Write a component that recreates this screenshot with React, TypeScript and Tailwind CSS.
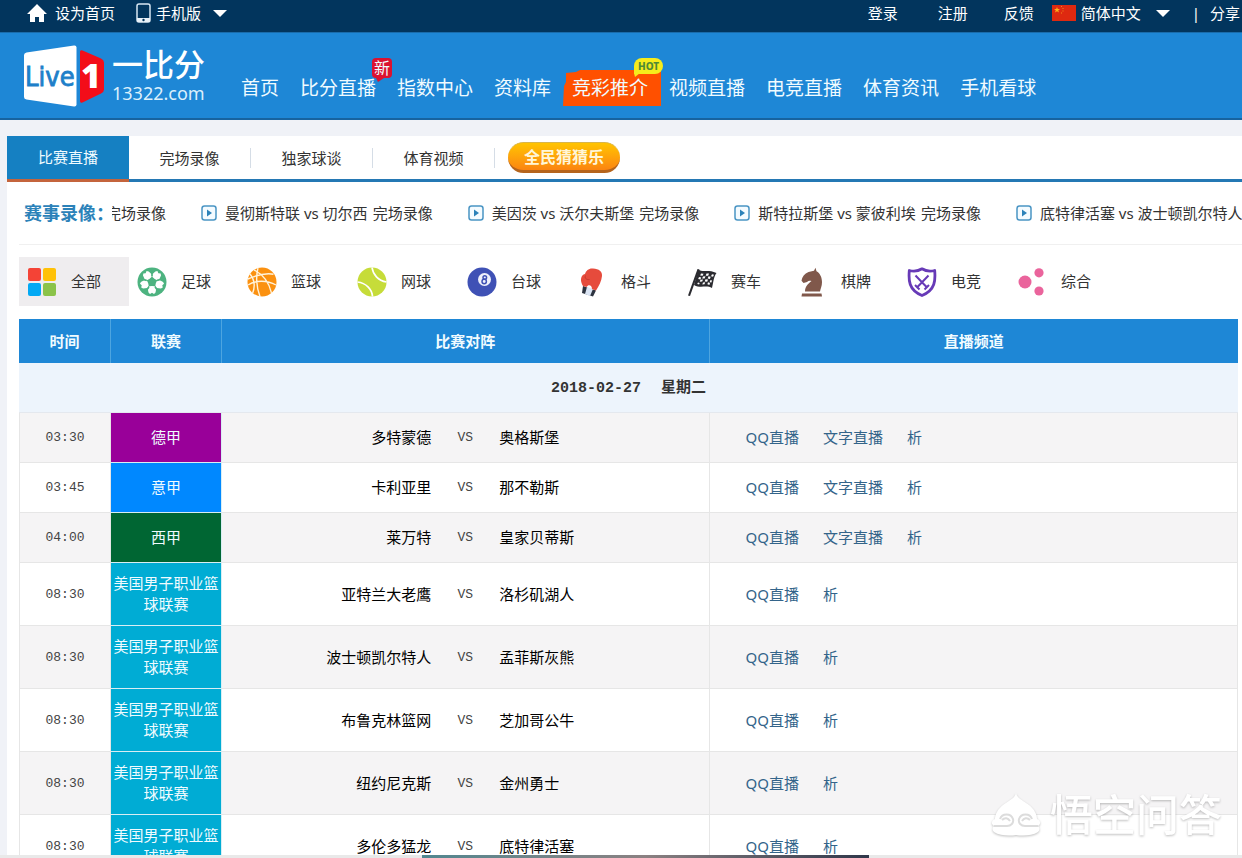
import React from "react";

interface Match {
    time: string;
    league: string;
    color: string;
    home: string;
    away: string;
    links: string[];
}

const NBA = "美国男子职业篮球联赛";
const FULL_LINKS = ["QQ直播", "文字直播", "析"];
const SHORT_LINKS = ["QQ直播", "析"];

const matches: Match[] = [
    { time: "03:30", league: "德甲", color: "bg-[#990099]", home: "多特蒙德", away: "奥格斯堡", links: FULL_LINKS },
    { time: "03:45", league: "意甲", color: "bg-[#0088ff]", home: "卡利亚里", away: "那不勒斯", links: FULL_LINKS },
    { time: "04:00", league: "西甲", color: "bg-[#006633]", home: "莱万特", away: "皇家贝蒂斯", links: FULL_LINKS },
    { time: "08:30", league: NBA, color: "bg-[#00acd4]", home: "亚特兰大老鹰", away: "洛杉矶湖人", links: SHORT_LINKS },
    { time: "08:30", league: NBA, color: "bg-[#00acd4]", home: "波士顿凯尔特人", away: "孟菲斯灰熊", links: SHORT_LINKS },
    { time: "08:30", league: NBA, color: "bg-[#00acd4]", home: "布鲁克林篮网", away: "芝加哥公牛", links: SHORT_LINKS },
    { time: "08:30", league: NBA, color: "bg-[#00acd4]", home: "纽约尼克斯", away: "金州勇士", links: SHORT_LINKS },
    { time: "08:30", league: NBA, color: "bg-[#00acd4]", home: "多伦多猛龙", away: "底特律活塞", links: SHORT_LINKS },
];

const navItems = ["首页", "比分直播", "指数中心", "资料库", "竞彩推介", "视频直播", "电竞直播", "体育资讯", "手机看球"];
const tabs = ["比赛直播", "完场录像", "独家球谈", "体育视频"];
const replays = [
    "曼彻斯特联 vs 切尔西",
    "美因茨 vs 沃尔夫斯堡",
    "斯特拉斯堡 vs 蒙彼利埃",
    "底特律活塞 vs 波士顿凯尔特人",
];

const Caret = () => (
    <svg className="h-[7px] w-[14px] shrink-0" viewBox="0 0 14 7" fill="#fff">
        <path d="M0 0h14L7 7z" />
    </svg>
);

const AllIcon = () => (
    <svg className="size-[30px]" viewBox="0 0 30 30">
        <rect x="1" y="1" width="13" height="13" rx="2" fill="#f44336" />
        <rect x="16" y="1" width="13" height="13" rx="2" fill="#ffc107" />
        <rect x="1" y="16" width="13" height="13" rx="2" fill="#03a9f4" />
        <rect x="16" y="16" width="13" height="13" rx="2" fill="#8bc34a" />
    </svg>
);

const SoccerIcon = () => (
    <svg className="size-[30px]" viewBox="0 0 30 30">
        <circle cx="15" cy="15" r="14.5" fill="#4db380" />
        {[36, 108, 180, 252, 324].map((a) => (
            <path
                key={a}
                transform={`rotate(${a} 15 15)`}
                d="M11.5 4.500L13 3l2 1.200L17 3l1.500 1.500.8 4-1.800 2.200L15 11l-2.500-.3-1.800-2.200z"
                fill="#fff"
            />
        ))}
        <path d="M15 11l3.800 2.800-1.400 4.500h-4.800l-1.400-4.500z" fill="#4db380" />
        <path d="M15 4v5M25 12l-5 1.500M4.500 12l5 1.500M21 24l-3-4M9 24l3-4" stroke="#4db380" strokeWidth="1.500" />
    </svg>
);

const BasketballIcon = () => (
    <svg className="size-[30px]" viewBox="0 0 30 30">
        <circle cx="15" cy="15" r="14.500" fill="#fb9110" />
        <g fill="none" stroke="#fff3dc" strokeWidth="1.400">
            <path d="M7 2.800C15 7 22 15 24.500 26M.8 12C10 8 20 6 26.500 7.200M11 1c-2 7-2 19 2 28.500M1 18c8-5 19-5 28 0M2.500 6.500c5 5 6 13 3 20" />
        </g>
    </svg>
);

const TennisIcon = () => (
    <svg className="size-[30px]" viewBox="0 0 30 30">
        <circle cx="15" cy="15" r="14.500" fill="#c6dc39" />
        <g fill="none" stroke="#fff" strokeWidth="1.700">
            <path d="M15 .5c1 7 6 13 14.500 14.500M.5 15C9 16 15 22 15.500 29.500" />
        </g>
    </svg>
);

const BilliardsIcon = () => (
    <svg className="size-[30px]" viewBox="0 0 30 30">
        <circle cx="15" cy="15" r="14.500" fill="#3f51b5" />
        <circle cx="17.500" cy="12.500" r="6.500" fill="#eef0fb" />
        <g fill="none" stroke="#3f51b5" strokeWidth="1.500">
            <circle cx="17.800" cy="10.500" r="1.800" />
            <circle cx="17.200" cy="14.500" r="2.200" />
        </g>
    </svg>
);

const BoxingIcon = () => (
    <svg className="size-[30px]" viewBox="0 0 30 30">
        <path d="M6 19l13 4.500-3 6L5 26z" fill="#2d3440" />
        <path d="M10 20l6 2-3 7-5-2z" fill="#dce6f5" />
        <path d="M6 19C3.500 15 3 10 6.500 7.500L8 7c1-3.500 4-6 8-5.500 6 .3 9.500 3 9 7.500-.5 5-3 10-6 14.500l-4-1.500c0-3-2-4.500-4-3.500L9.500 20z" fill="#e64b3c" />
        <path d="M8.500 8.500c-1 2.500.5 4.500 4 4" fill="none" stroke="#c63a2e" />
        <path d="M11 20l2-1 1 3z" fill="#f5f7fb" />
    </svg>
);

const RacingIcon = () => (
    <svg className="size-[30px]" viewBox="0 0 30 30">
        <path d="M10.500 2l2 .5L3 29l-2-.5z" fill="#2b2b30" />
        <path d="M11.500 2.500c4 3.500 9-.5 18 3.500-3 4-3 9-4.500 15-6-3.500-11 1-18-3z" fill="#2b2b30" />
        <g fill="#fff">
            <path d="M14 6.500l2.500.3-.8 2-2.500-.3zM19.500 6.500l2.500.1-.8 2.200-2.500-.1zM25 7.300l2 .5-1 2-2-.5zM16 9.500l2.500-.3-.8 2.300-2.500.1zM21.500 9.300l2.200.5-.8 2.200-2.200-.5zM12 10l2.200.5-.8 2-2.200-.5zM13.500 12.800l2.500-.4-.8 2.200-2.500.2zM18.500 12.300l2.500.2-.8 2.200-2.500-.2zM23.500 13.100l1.500.5-.6 2-1.800-.4zM11 15.500l1.700.4-.6 1.500-1.900-.4zM16 15.500l2.200-.3-.7 2-2.200.3zM21 15.300l2 .7-.6 1.900-2-.6z" />
        </g>
    </svg>
);

const ChessIcon = () => (
    <svg className="size-[30px]" viewBox="0 0 30 30" fill="#80584b">
        <path d="M18.500.8l1 3.500c3.500 2 5.500 6 5.500 11 0 4-1.500 6.500-2 9.200H8c0-5 3-7.500 6.500-10.500-2-.6-3-.3-4.500 1L6.500 16l-2-2.300c.5-4 3-7 7-8.700l5.500-1.200z" />
        <path d="M5 26.500h19.500l.5 3H4.500z" />
    </svg>
);

const EsportsIcon = () => (
    <svg className="size-[30px]" viewBox="0 0 30 30" fill="none" stroke="#673ab7">
        <path d="M15 1.800c-3.500 2.200-8 3-12.700 1.700C1.500 13 1.500 23 15 28.500 28.500 23 28.500 13 27.700 3.500 23 4.800 18.500 4 15 1.800z" strokeWidth="2.800" strokeLinejoin="round" />
        <path d="M8.500 8.500L20.500 21M21.500 8.500L9.500 21M8 18l4.500 4.500M22 18l-4.500 4.500" strokeWidth="2" />
    </svg>
);

const MixedIcon = () => (
    <svg className="size-[30px]" viewBox="0 0 30 30" fill="#ea649c">
        <circle cx="8" cy="15" r="6.500" />
        <circle cx="22" cy="5.800" r="4.600" />
        <circle cx="22" cy="24" r="4.600" />
    </svg>
);

const categories = [
    { label: "全部", Icon: AllIcon },
    { label: "足球", Icon: SoccerIcon },
    { label: "篮球", Icon: BasketballIcon },
    { label: "网球", Icon: TennisIcon },
    { label: "台球", Icon: BilliardsIcon },
    { label: "格斗", Icon: BoxingIcon },
    { label: "赛车", Icon: RacingIcon },
    { label: "棋牌", Icon: ChessIcon },
    { label: "电竞", Icon: EsportsIcon },
    { label: "综合", Icon: MixedIcon },
];

const TopBar = () => (
    <div className="flex h-[33px] shrink-0 items-center border-b border-[#1a6cab] bg-[#02355d] pr-0.5 pb-1.5 pl-[27px] text-[15px] leading-5 whitespace-nowrap text-white">
        <a href="#" className="flex items-center gap-2">
            <svg className="h-[18px] w-5" viewBox="0 0 20 18" fill="#fff">
                <path d="M10 0l10 10h-3v8h-5v-5H8v5H3v-8H0z" />
            </svg>
            设为首页
        </a>
        <button className="ml-[21px] flex items-center">
            <svg className="mr-[5px] h-5 w-[15px]" viewBox="0 0 15 20">
                <rect x="1" y="1" width="13" height="18" rx="2" fill="none" stroke="#d7e6f2" strokeWidth="1.500" />
                <path d="M1 15h13v4H1z" fill="#e8f1f8" />
                <circle cx="7.500" cy="17" r="1.200" fill="#02355d" />
            </svg>
            手机版
            <span className="ml-3"><Caret /></span>
        </button>
        <div className="ml-auto flex items-center">
            <a href="#">登录</a>
            <a href="#" className="ml-10">注册</a>
            <a href="#" className="ml-9">反馈</a>
            <svg className="ml-[18px] h-4 w-6" viewBox="0 0 24 16">
                <path d="M0 0h24v16H0z" fill="#de2910" />
                <path d="M5 2l.8 2H8L6.300 5.300l.6 2.200L5 6.200 3.100 7.500l.6-2.200L2 4h2.200z" fill="#ffb01a" />
                <path d="M9 1h1v1H9zM10.500 3h1v1h-1zM10.500 5.500h1v1h-1zM9 7.500h1v1H9z" fill="#f08a1a" />
            </svg>
            <label className="ml-[5px] flex items-center gap-3.5">
                <select aria-label="语言" className="appearance-none bg-transparent">
                    <option>简体中文</option>
                </select>
                <Caret />
            </label>
            <span className="ml-[22px]">|</span>
            <a href="#" className="ml-[10px]">分享</a>
        </div>
    </div>
);

const Logo = () => (
    <a href="#" className="flex shrink-0 items-center gap-2">
        <svg className="h-[62px] w-20" viewBox="0 0 80 62">
            <path d="M2.500 7.500L50 .5q2.500-.3 2.500 2v57q0 2.300-2.500 2L2.500 54.500Q0 54 0 52V10q0-2 2.500-2.500z" fill="#fff" />
            <path d="M56 7q0-2.500 2.500-1.500L77 13.500q3 1.500 3 4v27q0 2.500-3 4L58.500 57.500Q56 58.500 56 56z" fill="#f30d19" />
            <text x="1" y="41" fontSize="27" fill="#1e7fc9" stroke="#1e7fc9" strokeWidth="0.800" fontFamily="DejaVu Sans Condensed, sans-serif">Live</text>
            <text x="57" y="43" fontSize="34" fontWeight="800" fill="#fff" fontFamily="Open Sans, sans-serif">1</text>
        </svg>
        <span className="flex flex-col text-white">
            <span className="text-[31px] leading-[34px] font-medium">一比分</span>
            <span className="text-lg leading-6 text-[#dcf0fc]">13322.com</span>
        </span>
    </a>
);

const Header = () => (
    <header className="flex h-[87px] shrink-0 items-center border-b-2 border-[#17639f] bg-[#1e87d6] pl-6">
        <Logo />
        <nav className="ml-9 flex gap-[21px] pt-6 text-[19px] leading-7 whitespace-nowrap text-[#f0fbff]">
            {navItems.map((item) => (
                <a key={item} href="#" className="relative">
                    {item === "竞彩推介" && (
                        <svg className="absolute -top-1 -left-[9px] h-9 w-[98px]" viewBox="0 0 98 36" fill="#ff5000">
                            <path d="M3 3l10-1 4-2h81v36H0l1-20 2-4z" />
                        </svg>
                    )}
                    <span className="relative">{item}</span>
                    {item === "比分直播" && (
                        <span className="absolute -top-4 -right-4 rounded-sm bg-[#dc1230] px-0.5 text-base leading-5">
                            新
                            <svg className="absolute top-5 left-1 h-1 w-2" viewBox="0 0 8 4" fill="#dc1230">
                                <path d="M0 0h8L2 4z" />
                            </svg>
                        </span>
                    )}
                    {item === "竞彩推介" && (
                        <span className="absolute -top-4 -right-[15px] h-4 w-[29px] rounded-t-lg rounded-br-lg bg-[#f6ec1c] text-center text-[10px] leading-4 font-extrabold text-[#4d8a36]">
                            HOT
                            <svg className="absolute top-[15px] left-0 h-1 w-1.5" viewBox="0 0 6 4" fill="#f6ec1c">
                                <path d="M0 0h6L1 4z" />
                            </svg>
                        </span>
                    )}
                </a>
            ))}
        </nav>
    </header>
);

const Tabs = () => (
    <div className="flex h-[46px] items-stretch text-[15px]">
        {tabs.map((tab, i) => (
            <button
                key={tab}
                className={
                    i === 0
                        ? "w-[122px] border-b-3 border-[#c4643c] bg-[#1580c2] text-[#f0fbff]"
                        : "flex w-[122px] items-center border-b-3 border-[#2478b4]"
                }
            >
                {i === 0 ? tab : <span className="w-full border-r border-[#d5dde6] text-center leading-5">{tab}</span>}
            </button>
        ))}
        <div className="flex flex-1 items-center border-b-3 border-[#2478b4] pl-[13px]">
            <button className="h-[31px] rounded-full border-t border-b-3 border-t-[#d9b54a] border-b-[#b5641c] bg-linear-to-b from-[#ffc400] to-[#fb8410] px-4 text-base leading-[26px] font-bold text-[#fff6d8]">
                全民猜猜乐
            </button>
        </div>
    </div>
);

const Ticker = () => (
    <div className="ml-3 flex h-[63px] items-center border-b border-[#f0f0f0] pl-[5px] whitespace-nowrap">
        <h2 className="w-[88px] shrink-0 text-lg leading-7 font-bold text-[#2b82b9]">赛事录像：</h2>
        <div className="flex min-w-0 flex-1 overflow-hidden text-[15px] leading-6">
            <div className="-ml-1.5 flex gap-[35px]">
                <a href="#">完场录像</a>
                {replays.map((replay) => (
                    <a key={replay} href="#" className="flex shrink-0 items-center">
                        <svg className="mr-2 size-4" viewBox="0 0 16 16">
                            <rect x="1" y="1" width="14" height="14" rx="2.500" fill="#f4fbff" stroke="#4a95c4" strokeWidth="1.500" />
                            <path d="M6 4.500l5 3.500-5 3.500z" fill="#2b82b9" />
                        </svg>
                        <span>{replay}</span>
                        <span className="ml-[5px]">完场录像</span>
                    </a>
                ))}
            </div>
        </div>
    </div>
);

const Categories = () => (
    <div className="ml-3 flex pt-3 text-[15px]">
        {categories.map(({ label, Icon }, i) => (
            <button
                key={label}
                className={`flex h-[49px] w-[110px] shrink-0 items-center gap-3.5 pl-2 ${i === 0 ? "bg-[#efedef]" : ""}`}
            >
                <Icon />
                {label}
            </button>
        ))}
    </div>
);

const MatchTable = () => (
    <div className="mt-[13px] mr-1 ml-3">
        <table className="w-full table-fixed border-separate border-spacing-0 text-[15px] leading-[21px]">
            <colgroup>
                <col className="w-[92px]" />
                <col className="w-[111px]" />
                <col className="w-[40%]" />
                <col />
            </colgroup>
            <thead>
                <tr className="h-11 bg-[#1e87d6] text-[#f0fbff]">
                    <th className="border-r border-[#4da5e0]">时间</th>
                    <th className="border-r border-[#4da5e0]">联赛</th>
                    <th className="border-r border-[#4da5e0]">比赛对阵</th>
                    <th>直播频道</th>
                </tr>
            </thead>
            <tbody>
                <tr className="h-[50px] bg-[#edf4fc]">
                    <th colSpan={4} className="border-b border-[#e4e8ee]">
                        <span className="font-['Liberation_Mono','Noto_Sans_CJK_SC',monospace]">
                            2018-02-27<span className="ml-5">星期二</span>
                        </span>
                    </th>
                </tr>
                {matches.map((m, i) => (
                    <tr key={i} className={`${m.league === NBA ? "h-[63px]" : "h-[50px]"} ${i % 2 === 0 ? "bg-[#f5f4f5]" : "bg-white"}`}>
                        <td className="border-r border-b border-l border-[#e6e6e6] text-center font-['Liberation_Mono',monospace] text-[13px] text-[#444]">
                            {m.time}
                        </td>
                        <td className={`border-r border-b border-[#d8eef4] text-center text-[#f0fbff] ${m.color}`}>{m.league}</td>
                        <td className="border-r border-b border-[#e6e6e6] text-black">
                            <div className="flex items-center">
                                <span className="flex-1 text-right">{m.home}</span>
                                <span className="w-[68px] text-center font-['Liberation_Mono',monospace] text-[13px] text-[#444]">VS</span>
                                <span className="flex-1">{m.away}</span>
                            </div>
                        </td>
                        <td className="border-r border-b border-[#e6e6e6] pl-9">
                            <div className="flex gap-6 text-[#33648a]">
                                {m.links.map((link) => (
                                    <a key={link} href="#">{link}</a>
                                ))}
                            </div>
                        </td>
                    </tr>
                ))}
            </tbody>
        </table>
    </div>
);

const Watermark = () => (
    <div className="absolute right-5 bottom-[18px] flex items-center gap-2 text-white drop-shadow-[0_1px_1px_rgba(0,0,0,0.25)]">
        <svg className="h-11 w-[52px]" viewBox="0 0 52 44">
            <path d="M26 0c1 5 6 7 13 12 5 4 8 9 8 14 4 2 4 5 1 7 2 2 2 4 0 6-6 4-16 4-22 3-6 1-16 1-22-3-2-2-2-4 0-6-3-2-3-5 1-7 0-5 3-10 8-14C20 7 25 5 26 0z" fill="#fff" />
            <path d="M10 26c2-6 11-6 13 0 1 4-2 7-6 7H4M42 26c-2-6-11-6-13 0-1 4 2 7 6 7h13M12 27c3-3 6-2 8 1M40 27c-3-3-6-2-8 1" fill="none" stroke="#dcdcdc" strokeWidth="2" />
        </svg>
        <span className="text-[43px] leading-[50px] font-medium">悟空问答</span>
    </div>
);

const App: React.FC = () => {
    return (
        <div className="relative flex h-screen flex-col overflow-hidden bg-[#f0f2f7] font-['Noto_Sans','Noto_Sans_CJK_SC',sans-serif] text-[#333]">
            <TopBar />
            <Header />
            <main className="mt-4 ml-[7px] min-h-0 flex-1 overflow-hidden bg-white">
                <Tabs />
                <Ticker />
                <Categories />
                <MatchTable />
            </main>
            <div className="flex h-[3px] shrink-0 bg-[#e9e9e9]">
                <div className="ml-[34%] w-[36%] bg-linear-to-r from-[#4f8790] via-[#8b8182] to-[#30384a]" />
            </div>
            <Watermark />
        </div>
    );
};

export default App;
